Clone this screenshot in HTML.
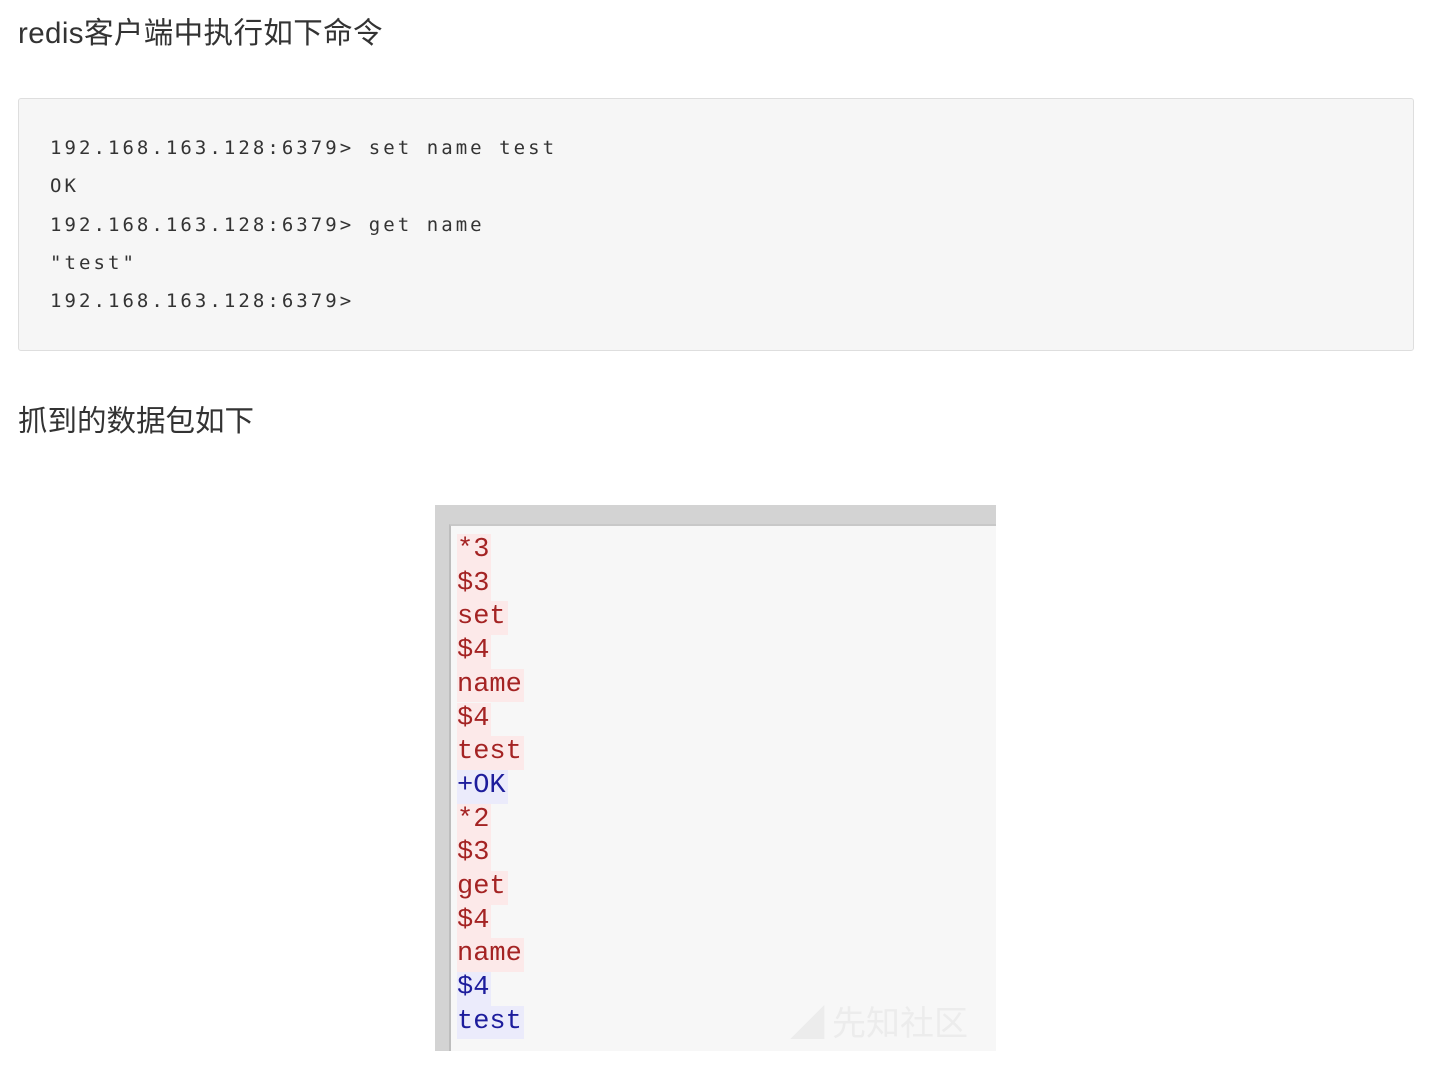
<!DOCTYPE html>
<html><head><meta charset="utf-8"><style>
body{margin:0;background:#fff;width:1430px;height:1089px;position:relative;overflow:hidden;font-family:"Liberation Sans","Noto Sans CJK SC",sans-serif;color:#333}
.h{position:absolute;left:18px;font-size:29.5px;line-height:34px;color:#333}
.code{position:absolute;left:18px;top:98px;width:1396px;height:253px;background:#f6f6f6;border:1px solid #dedede;border-radius:3px;box-sizing:border-box}
.code pre{margin:0;position:absolute;left:31px;top:30px;font-family:"DejaVu Sans Mono",monospace;font-size:19px;letter-spacing:3.05px;line-height:38.3px;color:#333}
.img{position:absolute;left:435px;top:505px;width:561px;height:546px;background:#d3d3d3}
.inner{position:absolute;left:14px;top:19px;right:0;bottom:0;background:#f7f7f7;border-left:2px solid #bdbdbd;border-top:2px solid #c8c8c8}
.inner div{position:absolute;left:6px;font-family:"Liberation Mono",monospace;font-size:27px;line-height:33.7px;height:33.7px;padding-right:2px}
.r{color:#a42323;background:#fce9e9}
.b{color:#1d1d9c;background:#ebebfb}
.wm{position:absolute;right:28px;bottom:6px;font-size:34px;color:#ececec;font-family:"Noto Sans CJK SC",sans-serif}
</style></head><body>
<div class="h" style="top:17px;letter-spacing:0.4px">redis客户端中执行如下命令</div>
<div class="code"><pre>192.168.163.128:6379&gt; set name test
OK
192.168.163.128:6379&gt; get name
"test"
192.168.163.128:6379&gt;</pre></div>
<div class="h" style="top:405px">抓到的数据包如下</div>
<div class="img"><div class="inner">
<div class="r" style="top:8px">*3</div>
<div class="r" style="top:41.7px">$3</div>
<div class="r" style="top:75.4px">set</div>
<div class="r" style="top:109.1px">$4</div>
<div class="r" style="top:142.8px">name</div>
<div class="r" style="top:176.5px">$4</div>
<div class="r" style="top:210.2px">test</div>
<div class="b" style="top:243.9px">+OK</div>
<div class="r" style="top:277.6px">*2</div>
<div class="r" style="top:311.3px">$3</div>
<div class="r" style="top:345px">get</div>
<div class="r" style="top:378.7px">$4</div>
<div class="r" style="top:412.4px">name</div>
<div class="b" style="top:446.1px">$4</div>
<div class="b" style="top:479.8px">test</div>
<span class="wm">◢ 先知社区</span>
</div></div>
</body></html>
